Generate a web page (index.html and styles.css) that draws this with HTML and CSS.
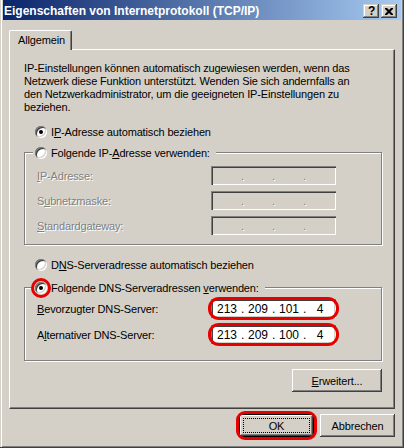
FILE: index.html
```html
<!DOCTYPE html>
<html lang="de">
<head>
  <meta charset="UTF-8">
  <title>Eigenschaften von Internetprotokoll (TCP/IP)</title>
  <link rel="stylesheet" href="styles.css">
</head>
<body>

  <div class="window">

    <!-- Titelleiste -->
    <div class="titlebar">
      <span class="title">Eigenschaften von Internetprotokoll (TCP/IP)</span>
      <div class="caption-buttons">
        <span class="cap-btn help">?</span>
        <span class="cap-btn">
          <svg width="8" height="7" viewBox="0 0 8 7">
            <path d="M0 0h2l2 2 2-2h2v1l-2.5 2.5 2.5 2.5v1h-2l-2-2-2 2h-2v-1l2.5-2.5-2.5-2.5z" fill="#000"/>
          </svg>
        </span>
      </div>
    </div>

    <div class="client">

      <div class="tabs">
        <div class="tab">Allgemein</div>
      </div>

      <div class="panel">
        <p class="intro">
          IP-Einstellungen können automatisch zugewiesen werden, wenn das<br>
          Netzwerk diese Funktion unterstützt. Wenden Sie sich andernfalls an<br>
          den Netzwerkadministrator, um die geeigneten IP-Einstellungen zu<br>
          beziehen.
        </p>

        <div class="radio-row first">
          <span class="radio checked"></span>
          <span>I<u>P</u>-Adresse automatisch beziehen</span>
        </div>

        <fieldset class="group ip-group">
          <legend>
            <span class="radio"></span>
            <span>Folgende IP-<u>A</u>dresse verwenden:</span>
          </legend>
          <div class="field-row disabled">
            <span class="label"><u>I</u>P-Adresse:</span>
            <div class="ipbox"><span></span><i>.</i><span></span><i>.</i><span></span><i>.</i><span></span></div>
          </div>
          <div class="field-row disabled">
            <span class="label">S<u>u</u>bnetzmaske:</span>
            <div class="ipbox"><span></span><i>.</i><span></span><i>.</i><span></span><i>.</i><span></span></div>
          </div>
          <div class="field-row disabled">
            <span class="label"><u>S</u>tandardgateway:</span>
            <div class="ipbox"><span></span><i>.</i><span></span><i>.</i><span></span><i>.</i><span></span></div>
          </div>
        </fieldset>

        <div class="radio-row dns-auto">
          <span class="radio"></span>
          <span>D<u>N</u>S-Serveradresse automatisch beziehen</span>
        </div>

        <fieldset class="group dns-group">
          <legend>
            <span class="radio checked mark"></span>
            <span>Folgende DNS-Serveradressen <u>v</u>erwenden:</span>
          </legend>
          <div class="field-row">
            <span class="label"><u>B</u>evorzugter DNS-Server:</span>
            <div class="ipbox active mark"><span>213</span><i>.</i><span>209</span><i>.</i><span>101</span><i>.</i><span>4</span></div>
          </div>
          <div class="field-row">
            <span class="label">A<u>l</u>ternativer DNS-Server:</span>
            <div class="ipbox active mark"><span>213</span><i>.</i><span>209</span><i>.</i><span>100</span><i>.</i><span>4</span></div>
          </div>
        </fieldset>

        <div class="panel-actions">
          <button class="btn wide"><u>E</u>rweitert...</button>
        </div>
      </div>

      <div class="dialog-actions">
        <button class="btn default mark">OK</button>
        <button class="btn">Abbrechen</button>
      </div>

    </div>
  </div>

</body>
</html>
```

FILE: styles.css
```css
body {
  margin: 0;
  font-family: "Liberation Sans", Arial, sans-serif;
  font-size: 11px;
  letter-spacing: -0.15px;
  color: #000;
  background: #d4d0c8;
}

.window {
  width: 404px;
  height: 448px;
  box-sizing: border-box;
  padding: 0 2px 2px 3px;
  background: #d4d0c8;
  border-right: 1px solid #404040;
  border-bottom: 1px solid #404040;
  box-shadow: inset 1px 0 #d4d0c8, inset 2px 0 #fff, inset -1px -1px #808080;
}

/* Title bar */
.titlebar {
  height: 20px;
  display: flex;
  align-items: flex-end;
  justify-content: space-between;
  padding: 0 4px 2px 1px;
  box-sizing: border-box;
  background: linear-gradient(to right, #0a246a, #a6caf0);
}

.title {
  color: #fff;
  font-weight: bold;
  font-size: 12px;
  line-height: 14px;
  letter-spacing: 0;
}

.caption-buttons {
  display: flex;
  gap: 2px;
}

.cap-btn {
  width: 16px;
  height: 14px;
  display: flex;
  align-items: center;
  justify-content: center;
  background: #d4d0c8;
  font-weight: bold;
  font-size: 12px;
  box-shadow: inset -1px -1px #404040, inset 1px 1px #d4d0c8, inset -2px -2px #808080, inset 2px 2px #fff;
}

.cap-btn.help {
  padding-left: 1px;
  box-sizing: border-box;
}

/* Client area */
.client {
  padding: 0 6px;
}

.tabs {
  display: flex;
  padding-top: 10px;
}

.tab {
  position: relative;
  z-index: 1;
  height: 20px;
  margin-bottom: -1px;
  padding: 0 6px 0 8px;
  line-height: 18px;
  background: #d4d0c8;
  border-top: 1px solid #fff;
  border-left: 1px solid #fff;
  border-right: 1px solid #404040;
  border-radius: 2px 2px 0 0;
  box-shadow: inset -1px 0 #808080;
  box-sizing: border-box;
}

.panel {
  height: 360px;
  box-sizing: border-box;
  padding: 12px 12px 0 14px;
  border: 1px solid;
  border-color: #fff #404040 #404040 #fff;
  box-shadow: inset -1px -1px #808080;
}

.intro {
  margin: 0;
  line-height: 13px;
}

/* Radio buttons */
.radio-row {
  display: flex;
  align-items: center;
  gap: 4px;
  height: 13px;
  margin-left: 11px;
}

.radio-row.first {
  margin-top: 11px;
}

.radio-row.dns-auto {
  margin-top: 13px;
}

.radio {
  position: relative;
  width: 12px;
  height: 12px;
  flex: none;
  border-radius: 50%;
  background: #fff;
  box-shadow: inset 1px 1px #808080, inset -1px -1px #fff, inset 2px 2px #404040, inset -2px -2px #d4d0c8;
}

.radio.checked::before {
  content: "";
  position: absolute;
  left: 4px;
  top: 4px;
  width: 4px;
  height: 4px;
  border-radius: 50%;
  background: #000;
}

/* Group boxes */
.group {
  margin: 8px 0 0;
  padding: 7px 0 9px 8px;
  border: 1px solid #808080;
  box-shadow: 1px 1px #fff, inset 1px 1px #fff;
  min-width: 0;
}

.group legend {
  display: flex;
  align-items: center;
  gap: 4px;
  height: 13px;
  padding: 0 6px 0 2px;
  background: #d4d0c8;
}

.dns-group {
  margin-top: 10px;
  padding: 5px 0 16px 8px;
}

.field-row {
  display: flex;
  align-items: center;
  margin-left: 4px;
}

.field-row + .field-row {
  margin-top: 6px;
}

.dns-group .field-row + .field-row {
  margin-top: 7px;
}

.label {
  width: 174px;
}

.disabled .label {
  color: #808080;
  text-shadow: 1px 1px 0 #fff;
}

/* IP address boxes */
.ipbox {
  position: relative;
  display: flex;
  width: 125px;
  height: 19px;
  box-sizing: border-box;
  padding: 0 1px 0 2px;
  align-items: center;
  background: #d4d0c8;
  box-shadow: inset 1px 1px #808080, inset 2px 2px #404040, inset -1px -1px #fff, inset -2px -2px #d4d0c8;
}

.ipbox span {
  width: 28px;
  text-align: center;
}

.ipbox i {
  width: 3px;
  font-style: normal;
  text-align: center;
  color: #808080;
  text-shadow: 1px 1px 0 #fff;
}

.ipbox.active {
  background: #fff;
  font-size: 12px;
  letter-spacing: 0;
}

.ipbox.active i {
  color: #000;
  text-shadow: none;
}

/* Buttons */
.btn {
  position: relative;
  width: 75px;
  height: 23px;
  padding: 0;
  border: none;
  font-family: inherit;
  font-size: 11px;
  letter-spacing: inherit;
  color: #000;
  background: #d4d0c8;
  box-shadow: inset -1px -1px #404040, inset 1px 1px #fff, inset -2px -2px #808080, inset 2px 2px #d4d0c8;
}

.btn.wide {
  width: 90px;
}

.btn.default {
  border: 1px solid #000;
  outline: 1px dotted #000;
  outline-offset: -5px;
}

.panel-actions {
  display: flex;
  justify-content: flex-end;
  margin-top: 8px;
}

.dialog-actions {
  display: flex;
  justify-content: flex-end;
  gap: 6px;
  margin-top: 5px;
}

/* Red annotation rings */
.mark::after {
  content: "";
  position: absolute;
  inset: -2px -3px;
  border: 3px solid #e60000;
  border-radius: 11px;
  pointer-events: none;
}

.btn.mark::after {
  inset: -4px -4px;
  border-radius: 9px;
}

.radio.mark::after {
  inset: -4px;
  border-radius: 50%;
}
```
